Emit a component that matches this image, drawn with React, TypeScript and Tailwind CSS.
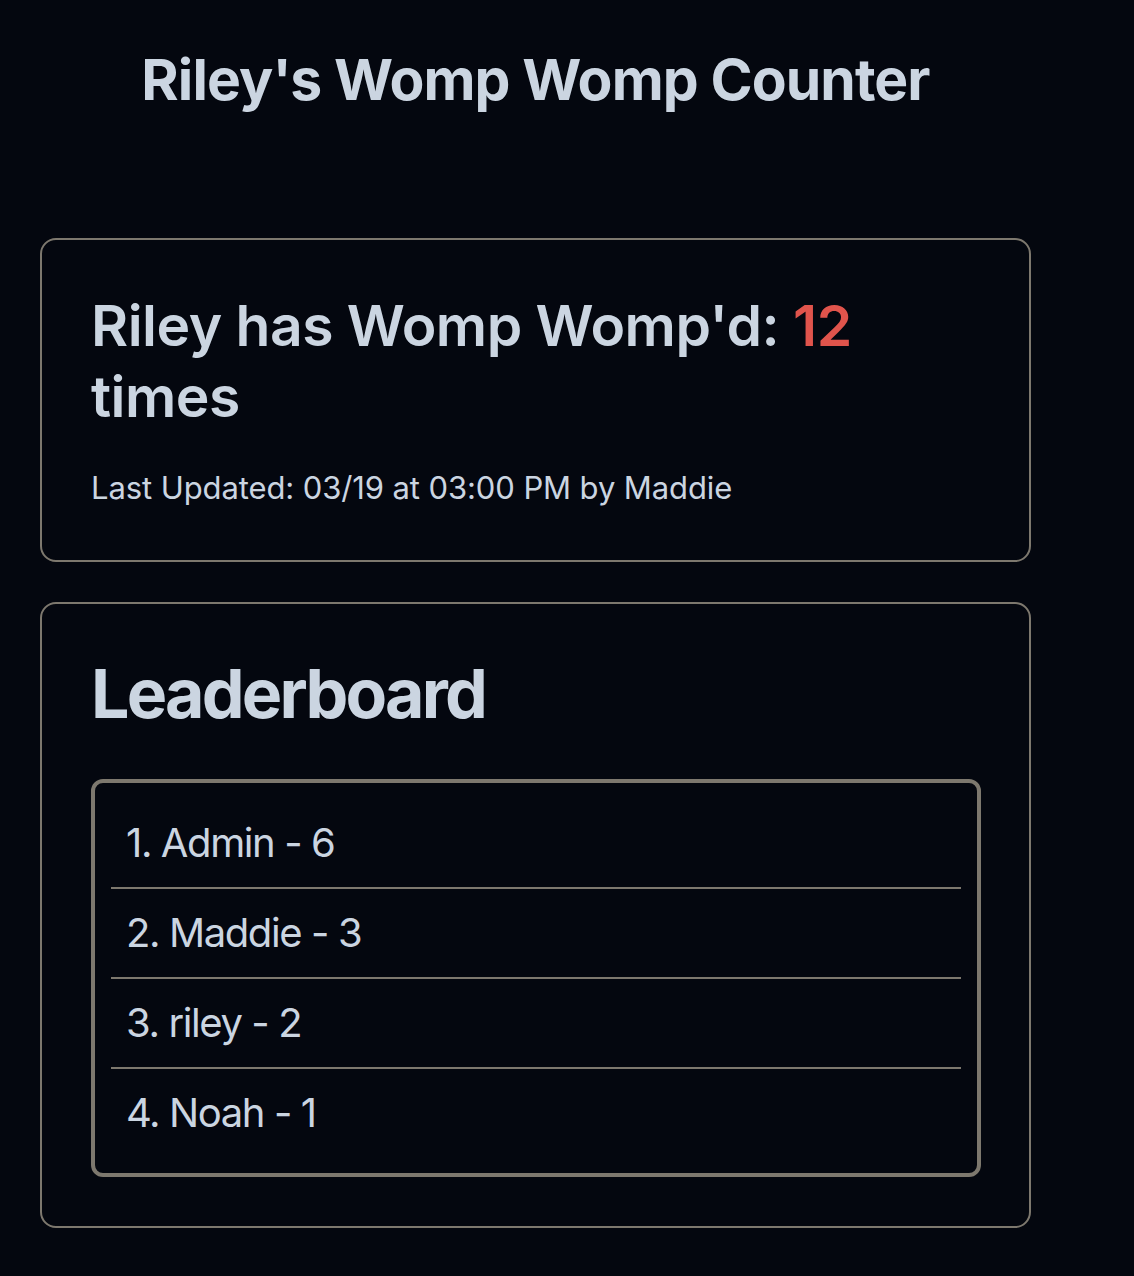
import React from "react";

const leaders = [
  { name: "Admin", count: 6 },
  { name: "Maddie", count: 3 },
  { name: "riley", count: 2 },
  { name: "Noah", count: 1 },
];

const App = () => {
  return (
    <div
      className="min-h-[1276px] w-full bg-[#04070f] text-[#cbd5e1]"
      style={{ fontFamily: "Inter, 'Noto Sans', sans-serif" }}
    >
      <div className="ml-[40px] w-[991px] pt-[46px]">
        <h1 className="text-center text-[57px] font-bold leading-[68px] tracking-[-0.9px]">
          Riley's Womp Womp Counter
        </h1>

        <div className="mt-[124px] rounded-[16px] border-2 border-[#7d786e] pl-[49px] pr-[48px] pt-[50px] pb-[52px]">
          <h2 className="text-[57px] font-semibold leading-[71px] tracking-[-0.5px]">
            Riley has Womp Womp'd: <span className="text-[#e0544c]">12</span>
            <br />
            times
          </h2>
          <p className="mt-[36px] text-[31px] leading-[40px] tracking-[-0.1px]">
            Last Updated: 03/19 at 03:00 PM by Maddie
          </p>
        </div>

        <div className="mt-[40px] rounded-[16px] border-2 border-[#7d786e] pl-[49px] pr-[48px] pt-[47px] pb-[49px]">
          <h2 className="text-[68px] font-bold leading-[84px] tracking-[-2.8px]">
            Leaderboard
          </h2>
          <ul className="mt-[44px] rounded-[12px] border-4 border-[#7d786e] px-[16px] py-[16px]">
            {leaders.map((l, i) => (
              <li
                key={l.name}
                className={
                  "px-[15px] py-[20px] text-[40px] leading-[48px] tracking-[-1.4px] " +
                  (i < leaders.length - 1 ? "border-b-2 border-[#7d786e]" : "")
                }
              >
                {i + 1}. {l.name} - {l.count}
              </li>
            ))}
          </ul>
        </div>
      </div>
    </div>
  );
};

export default App;
